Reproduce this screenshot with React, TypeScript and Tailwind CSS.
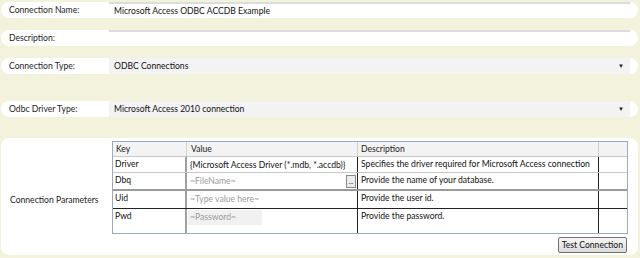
import React from "react";

const fieldRows = [
  { label: "Connection Name:", value: "Microsoft Access ODBC ACCDB Example", kind: "text", mt: "mt-[2px]" },
  { label: "Description:", value: "", kind: "text", mt: "mt-[12px]" },
  { label: "Connection Type:", value: "ODBC Connections", kind: "select", mt: "mt-[12px]" },
  { label: "Odbc Driver Type:", value: "Microsoft Access 2010 connection", kind: "select", mt: "mt-[27px]" },
];

const params = [
  { key: "Driver", value: "{Microsoft Access Driver (*.mdb, *.accdb)}", hint: false, desc: "Specifies the driver required for Microsoft Access connection", h: "h-[17px]", line: "border-b border-[#555]" },
  { key: "Dbq", value: "~FileName~", hint: true, browse: true, desc: "Provide the name of your database.", h: "h-[18px]", line: "border-b-2 border-[#9a9a9a]" },
  { key: "Uid", value: "~Type value here~", hint: true, desc: "Provide the user id.", h: "h-[18px]", line: "border-b border-[#222]" },
  { key: "Pwd", value: "~Password~", hint: true, password: true, desc: "Provide the password.", h: "h-[24px]", line: "" },
];

function FieldRow({ row }: { row: (typeof fieldRows)[number] }) {
  const isSelect = row.kind === "select";
  return (
    <div className={`${row.mt} flex h-[16px] items-stretch rounded-full bg-white`}>
      <div className="flex w-[108px] items-center pl-[8px] text-[#222]">{row.label}</div>
      <div
        className={`flex flex-1 items-center pl-[5px] pr-[6px] ${
          isSelect ? "bg-[#f3f3f3]" : "border-t-2 border-[#dcdcdc] bg-white"
        }`}
      >
        <span className="flex-1 text-[#111]">{row.value}</span>
        {isSelect && <span className="text-[6px] leading-none text-[#222]">▼</span>}
      </div>
      <div className="w-[8px]" />
    </div>
  );
}

export default function App() {
  return (
    <div className="h-[258px] w-[640px] overflow-hidden whitespace-nowrap bg-[#f3f2dc] pl-[1px] pr-[2px] font-['Lato',sans-serif] text-[8.6px] leading-none">
      {fieldRows.map((row) => (
        <FieldRow key={row.label} row={row} />
      ))}

      {/* Connection Parameters */}
      <div className="mt-[21px] flex h-[117px] rounded-[8px] bg-white pt-[3px]">
        <div className="flex w-[111px] items-center pl-[9px] pt-[4px] text-[#222]">Connection Parameters</div>
        <div className="flex flex-1 flex-col pr-[10px]">
          <div className="border border-[#9aabbf]">
            <div className="grid h-[14px] grid-cols-[74px_171px_241px_1fr] bg-[#f3f3f3] text-[#222]">
              <div className="flex items-center border-r border-[#d0d0d0] pl-[3px]">Key</div>
              <div className="flex items-center border-r border-[#d0d0d0] pl-[4px]">Value</div>
              <div className="flex items-center border-r border-[#d0d0d0] pl-[3px]">Description</div>
              <div />
            </div>
            {params.map((p, i) => (
              <div
                key={p.key}
                className={`grid ${p.h} grid-cols-[74px_171px_241px_1fr] ${i === 0 ? "border-t border-[#c8c8c8]" : ""} ${p.line}`}
              >
                <div className="flex items-start border-r-2 border-[#a0a0a0] pl-[2px] pt-[3px] text-[#111]">{p.key}</div>
                <div className="flex items-start overflow-hidden border-r border-[#222] pl-[1px] pt-[1px]">
                  <div
                    className={`flex h-[15px] items-center pl-[2px] ${
                      p.password ? "w-[74px] bg-[#f1f1f1]" : "flex-1"
                    } ${p.hint ? "text-[#9a9a9a]" : "text-[#111]"}`}
                  >
                    <span className="flex-1">{p.value}</span>
                    {p.browse && (
                      <span className="mr-[1px] flex h-[13px] w-[10px] items-end justify-center border border-[#8a8a8a] bg-[#ececec] pb-[2px] text-[7px] text-[#333]">
                        ...
                      </span>
                    )}
                  </div>
                </div>
                <div className="flex items-start overflow-hidden border-r border-[#222] pl-[3px] pt-[3px] text-[#111]">{p.desc}</div>
                <div />
              </div>
            ))}
          </div>
          <div className="mt-[3px] flex justify-end pr-[1px]">
            <button className="h-[16px] rounded-[2px] border border-[#707070] bg-gradient-to-b from-[#f6f6f6] to-[#dcdcdc] px-[3px] text-[8.6px] text-[#111]">
              Test Connection
            </button>
          </div>
        </div>
      </div>
    </div>
  );
}
